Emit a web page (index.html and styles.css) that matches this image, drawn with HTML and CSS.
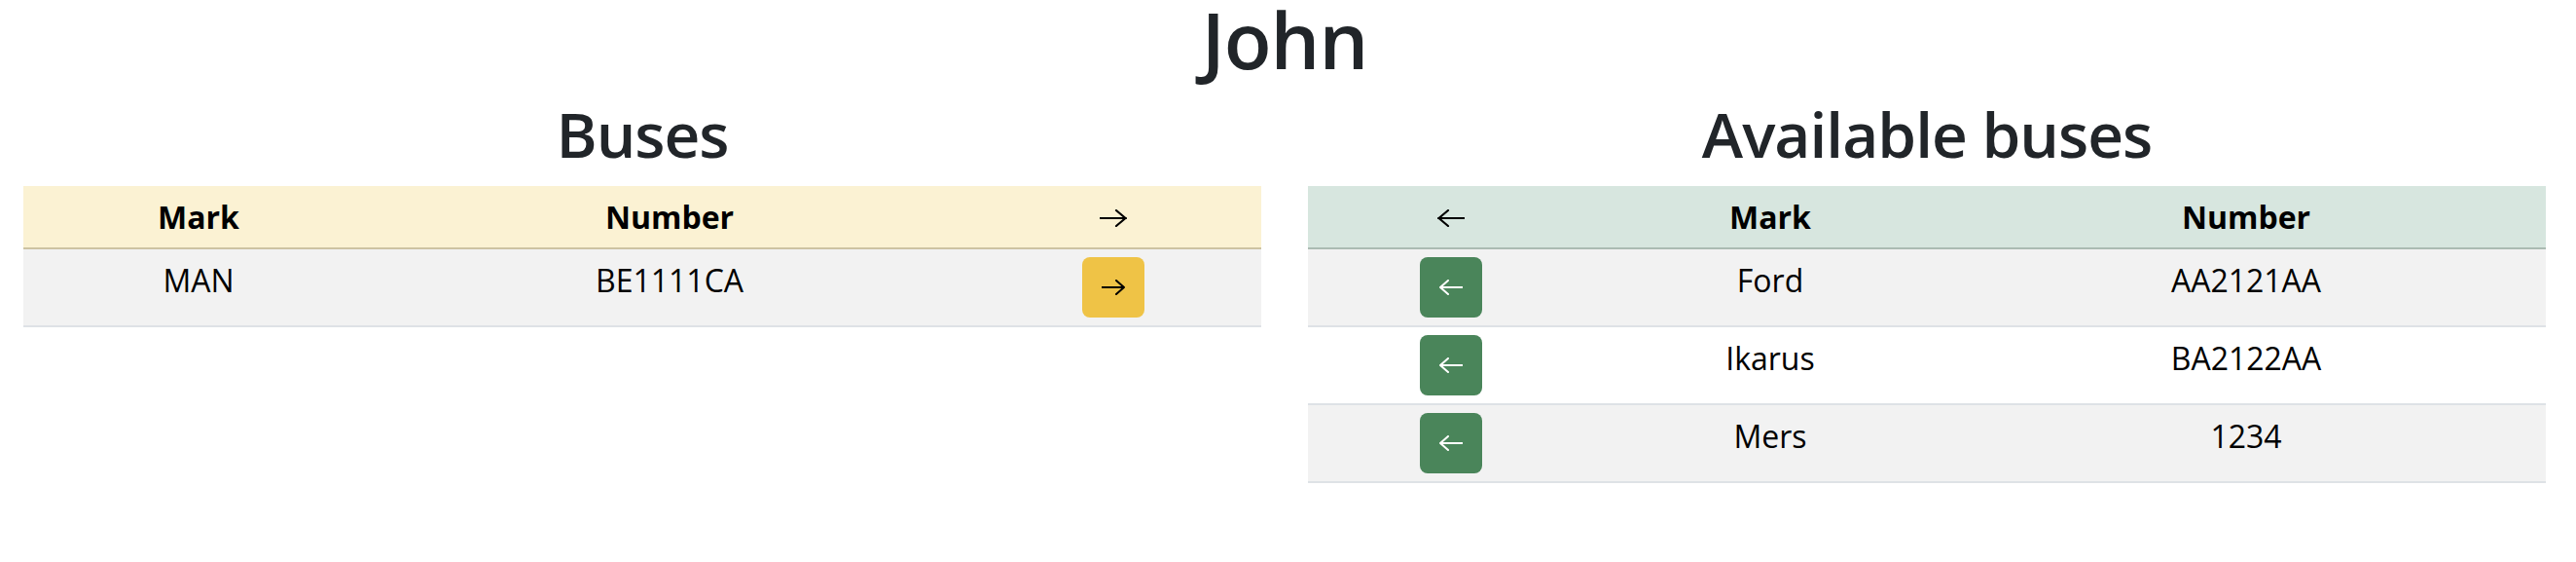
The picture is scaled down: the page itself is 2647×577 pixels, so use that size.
FILE: index.html
```html
<!DOCTYPE html>
<html lang="en">
<head>
<meta charset="utf-8">
<title>John</title>
<link rel="stylesheet" href="styles.css">
</head>
<body>
<div class="page">
  <h1 class="title">John</h1>
  <div class="columns">
    <section class="panel">
      <h2 class="panel-title">Buses</h2>
      <table class="bus-table">
        <colgroup>
          <col class="w-360"><col class="w-608"><col class="w-304">
        </colgroup>
        <thead class="head-warning">
          <tr>
            <th>Mark</th>
            <th>Number</th>
            <th><span class="icon-cell"><svg class="arrow-lg" viewBox="0 0 28 18" aria-hidden="true"><path d="M0.5 9H27M17 1l9.5 8-9.5 8"/></svg></span></th>
          </tr>
        </thead>
        <tbody>
          <tr class="odd">
            <td>MAN</td>
            <td>BE1111CA</td>
            <td><button class="btn btn-warning" type="button"><svg class="arrow-sm" viewBox="0 0 24 16" aria-hidden="true"><path d="M0.5 8H23M15 1l8 7-8 7"/></svg></button></td>
          </tr>
        </tbody>
      </table>
    </section>
    <section class="panel">
      <h2 class="panel-title">Available buses</h2>
      <table class="bus-table">
        <colgroup>
          <col class="w-294"><col class="w-362"><col class="w-616">
        </colgroup>
        <thead class="head-success">
          <tr>
            <th><span class="icon-cell"><svg class="arrow-lg" viewBox="0 0 28 18" aria-hidden="true"><path d="M27.5 9H1M11 1L1.5 9l9.5 8"/></svg></span></th>
            <th>Mark</th>
            <th>Number</th>
          </tr>
        </thead>
        <tbody>
          <tr class="odd">
            <td><button class="btn btn-success" type="button"><svg class="arrow-sm" viewBox="0 0 24 16" aria-hidden="true"><path d="M23.5 8H1M9 1L1 8l8 7"/></svg></button></td>
            <td>Ford</td>
            <td>AA2121AA</td>
          </tr>
          <tr>
            <td><button class="btn btn-success" type="button"><svg class="arrow-sm" viewBox="0 0 24 16" aria-hidden="true"><path d="M23.5 8H1M9 1L1 8l8 7"/></svg></button></td>
            <td>Ikarus</td>
            <td>BA2122AA</td>
          </tr>
          <tr class="odd">
            <td><button class="btn btn-success" type="button"><svg class="arrow-sm" viewBox="0 0 24 16" aria-hidden="true"><path d="M23.5 8H1M9 1L1 8l8 7"/></svg></button></td>
            <td>Mers</td>
            <td>1234</td>
          </tr>
        </tbody>
      </table>
    </section>
  </div>
</div>
</body>
</html>
```
FILE: styles.css
```css
html, body {
  margin: 0;
  padding: 0;
  background: #ffffff;
}

body {
  font-family: "Open Sans", "Noto Sans", sans-serif;
  color: #212529;
}

.page {
  width: 2640px;
  box-sizing: border-box;
  padding: 0 24px;
}

.title {
  margin: 0 0 20px;
  text-align: center;
  font-size: 80px;
  line-height: 80px;
  font-weight: 600;
  letter-spacing: -1px;
  color: #212529;
}

.columns {
  display: grid;
  grid-template-columns: 1fr 1fr;
  column-gap: 48px;
}

.panel-title {
  margin: 0 0 15px;
  text-align: center;
  font-size: 64px;
  line-height: 76px;
  font-weight: 600;
  letter-spacing: -1px;
  color: #212529;
}

.bus-table {
  width: 100%;
  border-collapse: collapse;
  table-layout: fixed;
  color: #000;
  font-size: 32px;
  line-height: 48px;
}

.w-360 { width: 360px; }
.w-608 { width: 608px; }
.w-304 { width: 304px; }
.w-294 { width: 294px; }
.w-362 { width: 362px; }
.w-616 { width: 616px; }

.bus-table th {
  height: 64px;
  padding: 0 8px;
  box-sizing: border-box;
  font-weight: 700;
  text-align: center;
  vertical-align: middle;
}

.head-warning th {
  background: #fbf2d3;
  border-bottom: 2px solid #cdc3a2;
}

.head-success th {
  background: #d7e6df;
  border-bottom: 2px solid #abbbb3;
}

.bus-table td {
  padding: 8px;
  height: 78px;
  box-sizing: border-box;
  text-align: center;
  vertical-align: top;
  border-bottom: 2px solid #dee2e6;
  background: #ffffff;
}

.bus-table tr.odd td {
  background: #f2f2f2;
}

.icon-cell {
  display: inline-flex;
  align-items: center;
  justify-content: center;
  height: 48px;
  vertical-align: middle;
}

.arrow-lg {
  width: 28px;
  height: 18px;
  fill: none;
  stroke: #000;
  stroke-width: 2.2;
  stroke-linecap: round;
  stroke-linejoin: round;
}

.btn {
  display: inline-flex;
  align-items: center;
  justify-content: center;
  width: 64px;
  height: 62px;
  padding: 0;
  border: 0;
  border-radius: 8px;
  cursor: pointer;
  vertical-align: top;
}

.btn-warning {
  background: #efc346;
}

.btn-warning .arrow-sm {
  stroke: #000;
}

.btn-success {
  background: #4a855a;
}

.btn-success .arrow-sm {
  stroke: #ffffff;
}

.arrow-sm {
  width: 24px;
  height: 16px;
  fill: none;
  stroke-width: 2;
  stroke-linecap: round;
  stroke-linejoin: round;
}
```
